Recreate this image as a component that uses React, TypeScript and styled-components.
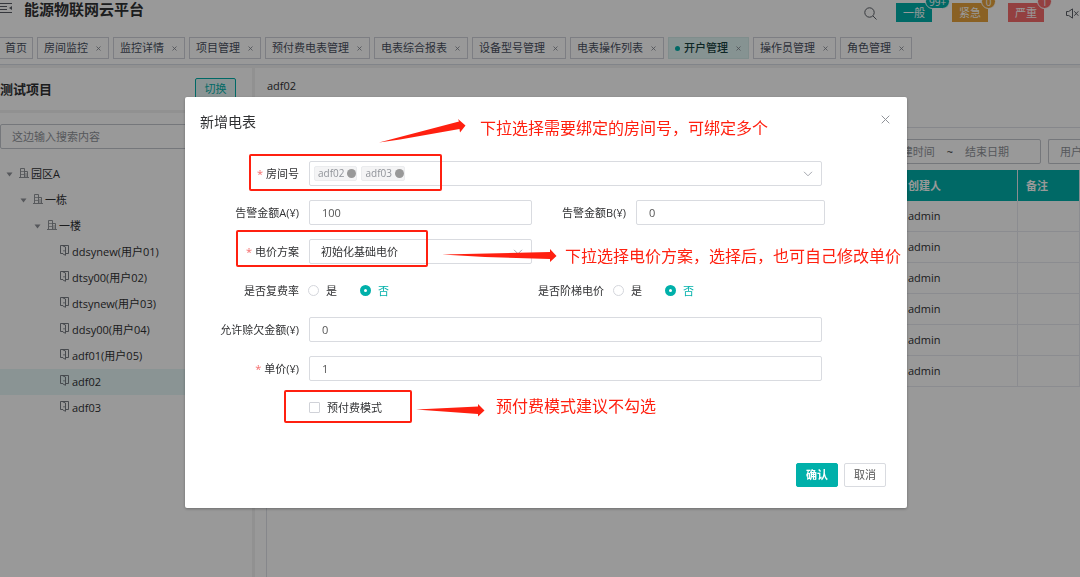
import React from "react";
import styled, { createGlobalStyle } from "styled-components";

const teal = "#00b0aa";
const red = "#ff2010";

const Global = createGlobalStyle`
  * { box-sizing: border-box; }
  html, body, #root { height: 100%; }
  body {
    margin: 0;
    overflow: hidden;
    background: #f2f2f2;
    color: #303133;
    font: 11px/16px "Open Sans", "Noto Sans CJK SC", sans-serif;
  }
  button, input, select { font: inherit; color: inherit; }
  h1, h2, ul { margin: 0; padding: 0; }
`;

const Page = styled.div`
  display: flex;
  flex-direction: column;
  min-height: 100%;
`;
const Header = styled.header`
  background: #fff;
  border-bottom: 1px solid #d8dce5;
`;
const TopBar = styled.div`
  display: flex;
  align-items: flex-start;
  height: 37px;
`;
const MenuButton = styled.button`
  width: 12px;
  height: 18px;
  padding: 0;
  border: 0;
  background: none;
  svg { display: block; }
`;
const Brand = styled.h1`
  flex: 1;
  padding-left: 12px;
  font-size: 15px;
  line-height: 18px;
`;
const TopTools = styled.div`
  display: flex;
  align-items: flex-start;
  padding: 3px 1px 0 0;
`;
const IconButton = styled.button`
  display: flex;
  align-items: center;
  height: 20px;
  padding: 0;
  border: 0;
  background: none;
  color: #5a5e66;
`;
const Alarms = styled.div`
  display: flex;
  gap: 20px;
  padding: 0 22px 0 19px;
`;
const Alarm = styled.button<{ $color: string }>`
  position: relative;
  width: 36px;
  height: 19px;
  padding: 0;
  border: 0;
  background: ${(p) => p.$color};
  color: #fff;
  line-height: 19px;
`;
const Count = styled.span<{ $color: string }>`
  position: absolute;
  left: 29px;
  bottom: 13px;
  min-width: 15px;
  height: 15px;
  padding: 0 3px;
  border: 1px solid #fff;
  border-radius: 8px;
  background: ${(p) => p.$color};
  font-size: 10px;
  line-height: 14px;
`;
const Tabs = styled.nav`
  display: flex;
  gap: 4px;
  height: 27px;
`;
const Tab = styled.a<{ $active?: boolean; $first?: boolean }>`
  display: flex;
  align-items: center;
  flex: none;
  height: 22px;
  padding: 0 ${(p) => (p.$first ? 5 : 7)}px 0 ${(p) => (p.$first ? 5 : 6)}px;
  border: 1px solid ${(p) => (p.$active ? "#d4ecea" : "#d0d3da")};
  border-left-width: ${(p) => (p.$first ? 0 : 1)}px;
  background: ${(p) => (p.$active ? "#e0f5f4" : "#fff")};
  color: ${(p) => (p.$active ? "#17403e" : "#495060")};
  font-weight: ${(p) => (p.$active ? 500 : 400)};
  text-decoration: none;
  white-space: nowrap;
`;
const Dot = styled.i`
  width: 5px;
  height: 5px;
  margin-right: 4px;
  border-radius: 50%;
  background: ${teal};
`;
const TabClose = styled.svg`
  width: 5px;
  height: 5px;
  margin-left: 8px;
`;
const Body = styled.div`
  display: flex;
  flex: 1;
  gap: 3px;
  padding-top: 3px;
`;
const Sidebar = styled.aside`
  flex: 0 0 252px;
  background: #fff;
`;
const ProjectBar = styled.div`
  display: flex;
  align-items: center;
  justify-content: space-between;
  height: 45px;
  padding-right: 16px;
  border-bottom: 3px solid #f2f2f2;
`;
const ProjectName = styled.h2`
  font-size: 13px;
  line-height: 18px;
`;
const SwitchButton = styled.button`
  width: 41px;
  height: 22px;
  padding: 0;
  border: 1px solid ${teal};
  border-radius: 2px;
  background: #e6f7f7;
  color: ${teal};
`;
const SearchBox = styled.input`
  display: block;
  width: 240px;
  height: 25px;
  margin: 11px 0 12px;
  padding: 0 11px;
  border: 1px solid #c4c7ce;
  border-radius: 2px;
  background: #fff;
  &::placeholder { color: #909399; opacity: 1; }
`;
const Tree = styled.ul`list-style: none;`;
const TreeRow = styled.li<{ $level: number; $selected?: boolean }>`
  display: flex;
  align-items: center;
  height: 26px;
  padding-left: ${(p) => 6 + p.$level * 14}px;
  background: ${(p) => (p.$selected ? "#e6f7f7" : "transparent")};
  white-space: nowrap;
`;
const Caret = styled.svg`
  width: 7px;
  height: 5px;
  margin-right: 6px;
`;
const Leaf = styled.svg`
  width: 9px;
  height: 11px;
  margin: 0 3px 4px 12px;
`;
const Building = styled.svg`
  width: 10px;
  height: 10px;
  margin: 0 2px 2px 0;
`;
const Main = styled.main`
  display: flex;
  flex-direction: column;
  flex: 1;
  min-width: 0;
  background: #fff;
`;
const MainTitle = styled.h2`
  height: 60px;
  padding: 10px 12px;
  border-bottom: 1px solid #dfe2e8;
  font-size: 11px;
  font-weight: 500;
  line-height: 16px;
`;
const Panel = styled.div`
  flex: 1;
  margin-left: 11px;
  border-left: 1px solid #dfe2e8;
`;
const Filters = styled.div`
  display: flex;
  justify-content: flex-end;
  gap: 7px;
  padding: 11px 0 6px;
`;
const DateRange = styled.div`
  display: flex;
  align-items: center;
  justify-content: flex-end;
  gap: 12px;
  width: 240px;
  height: 25px;
  padding-right: 12px;
  border: 1px solid #c4c7ce;
  border-radius: 2px;
`;
const DateInput = styled.input<{ $align?: string }>`
  width: 63px;
  padding: 0;
  border: 0;
  background: none;
  text-align: ${(p) => p.$align ?? "left"};
  &::placeholder { color: #909399; opacity: 1; }
`;
const UserFilter = styled.input`
  width: 32px;
  height: 25px;
  padding: 0 0 0 11px;
  border: 1px solid #c4c7ce;
  border-right: 0;
  border-radius: 2px 0 0 2px;
  &::placeholder { color: #909399; opacity: 1; }
`;
const Grid = styled.table`
  width: 100%;
  border-collapse: separate;
  border-spacing: 0;
  table-layout: fixed;
`;
const HeadCell = styled.th<{ $w?: number }>`
  width: ${(p) => (p.$w ? p.$w + "px" : "auto")};
  height: 31px;
  padding: 0 8px;
  border-right: 1px solid #e8eaf0;
  background: ${teal};
  color: #fff;
  text-align: left;
`;
const Cell = styled.td`
  height: 31px;
  padding: 0 8px;
  border-right: 1px solid #e8eaf0;
  border-bottom: 1px solid #e8eaf0;
`;

const Overlay = styled.div`
  position: fixed;
  inset: 0;
  padding: 97px 173px 24px 185px;
  background: rgba(0, 0, 0, 0.4);
`;
const Dialog = styled.section`
  position: relative;
  padding: 15px 0 21px;
  border-radius: 2px;
  background: #fff;
  box-shadow: 0 1px 3px rgba(0, 0, 0, 0.3);
`;
const DialogHead = styled.div`
  display: flex;
  align-items: flex-start;
  justify-content: space-between;
  height: 49px;
  padding: 0 17px 0 15px;
`;
const DialogTitle = styled.h2`
  font-size: 14px;
  font-weight: 400;
  line-height: 20px;
`;
const CloseButton = styled.button`
  padding: 3px 0 0;
  border: 0;
  background: none;
  svg { display: block; }
`;
const Form = styled.form`
  display: flex;
  flex-direction: column;
  gap: 14px;
`;
const Row = styled.div<{ $pair?: boolean; $end?: number }>`
  display: grid;
  grid-template-columns: ${(p) => (p.$pair ? "347px 1fr" : "1fr")};
  height: 25px;
  padding-right: ${(p) => p.$end ?? 85}px;
`;
const Field = styled.div<{ $label?: number; $gap?: number }>`
  display: grid;
  grid-template-columns: ${(p) => p.$label ?? 114}px 1fr;
  column-gap: ${(p) => p.$gap ?? 10}px;
  align-items: center;
`;
const Label = styled.label<{ $required?: boolean }>`
  text-align: right;
  white-space: nowrap;
  &::before {
    content: "${(p) => (p.$required ? "*" : "")}";
    margin-right: ${(p) => (p.$required ? 3 : 0)}px;
    color: #f56c6c;
  }
`;
const TextInput = styled.input`
  width: 100%;
  height: 25px;
  padding: 0 12px;
  border: 1px solid #d9dbe0;
  border-radius: 2px;
  background: #fff;
  color: #555;
`;
const SelectWrap = styled.div`
  display: flex;
  align-items: center;
  height: 25px;
  padding: 0 8px 0 4px;
  border: 1px solid #d9dbe0;
  border-radius: 2px;
`;
const Select = styled.select`
  flex: 1;
  min-width: 0;
  height: 23px;
  padding: 0 0 0 7px;
  border: 0;
  appearance: none;
  background: none;
  outline: 0;
`;
const Tag = styled.span`
  display: flex;
  align-items: center;
  gap: 3px;
  height: 15px;
  margin-right: 4px;
  padding: 0 0 0 3px;
  border: 1px solid #ebecee;
  border-radius: 2px;
  background: #f4f4f5;
  color: #909399;
  font-size: 10px;
  line-height: 13px;
`;
const TagRemove = styled.button`
  width: 9px;
  height: 9px;
  padding: 0;
  border: 0;
  border-radius: 50%;
  background: #999;
`;
const Choices = styled.div`
  display: flex;
  gap: 23px;
`;
const Choice = styled.label<{ $on?: boolean }>`
  display: flex;
  align-items: center;
  gap: 7px;
  color: ${(p) => (p.$on ? teal : "inherit")};
`;
const Radio = styled.input`
  width: 11px;
  height: 11px;
  margin: 0;
  border: 1px solid #d4d6dc;
  border-radius: 50%;
  appearance: none;
  &:checked {
    border: 4px solid ${teal};
  }
`;
const Check = styled.input`
  width: 11px;
  height: 11px;
  margin: 0;
  border: 1px solid #d0d2d8;
  border-radius: 1px;
  appearance: none;
`;
const Footer = styled.footer`
  display: flex;
  justify-content: flex-end;
  gap: 6px;
  padding: 43px 21px 0 0;
`;
const ActionButton = styled.button<{ $primary?: boolean }>`
  width: 42px;
  height: 24px;
  padding: 0;
  border: 1px solid ${(p) => (p.$primary ? teal : "#d9dbe0")};
  border-radius: 2px;
  background: ${(p) => (p.$primary ? teal : "#fff")};
  color: ${(p) => (p.$primary ? "#fff" : "#555")};
  font-weight: ${(p) => (p.$primary ? 700 : 400)};
`;

const Highlight = styled.div<{ $x: number; $y: number; $w: number; $h: number }>`
  position: absolute;
  left: ${(p) => p.$x}px;
  top: ${(p) => p.$y}px;
  width: ${(p) => p.$w}px;
  height: ${(p) => p.$h}px;
  border: 2px solid ${red};
  border-radius: 2px;
  pointer-events: none;
`;
const Note = styled.p<{ $x: number; $y: number }>`
  position: absolute;
  left: ${(p) => p.$x}px;
  top: ${(p) => p.$y}px;
  margin: 0;
  color: ${red};
  font-size: 16px;
  line-height: 24px;
  white-space: nowrap;
`;
const Arrows = styled.svg`
  position: absolute;
  left: 0;
  top: 0;
  pointer-events: none;
`;

const tabs = [
  "房间监控", "监控详情", "项目管理", "预付费电表管理", "电表综合报表",
  "设备型号管理", "电表操作列表", "开户管理", "操作员管理", "角色管理",
];
const alarms = [
  { name: "一般", count: "99+", color: "#00b0aa" },
  { name: "紧急", count: "0", color: "#e6a23c" },
  { name: "严重", count: "1", color: "#f56c6c" },
];
const branches = ["园区A", "一栋", "一楼"];
const leaves = [
  "ddsynew(用户01)", "dtsy00(用户02)", "dtsynew(用户03)",
  "ddsy00(用户04)", "adf01(用户05)", "adf02", "adf03",
];

const Chevron = () => (
  <svg width="10" height="6" viewBox="0 0 10 6" fill="none" stroke="#a4a7ae">
    <path d="M1 .8 5 4.8 9 .8" />
  </svg>
);

const YesNo = ({ name }: { name: string }) => (
  <Choices>
    <Choice><Radio type="radio" name={name} />是</Choice>
    <Choice $on><Radio type="radio" name={name} defaultChecked />否</Choice>
  </Choices>
);

export default function App() {
  return (
    <>
      <Global />
      <Page>
        <Header>
          <TopBar>
            <MenuButton aria-label="折叠菜单">
              <svg width="12" height="18" stroke="#5a5e66" fill="none">
                <path d="M0 3.5h12M0 6.5h7M0 9.5h7M0 12.5h12" />
                <path d="M12 6v4L9 8z" fill="#5a5e66" stroke="none" />
              </svg>
            </MenuButton>
            <Brand>能源物联网云平台</Brand>
            <TopTools>
              <IconButton aria-label="搜索">
                <svg width="13" height="13" viewBox="0 0 13 13" fill="none" stroke="currentColor">
                  <circle cx="5.5" cy="5.5" r="4.7" />
                  <path d="m9 9 3.5 3.5" />
                </svg>
              </IconButton>
              <Alarms>
                {alarms.map((a) => (
                  <Alarm key={a.name} $color={a.color}>
                    {a.name}
                    <Count $color={a.color}>{a.count}</Count>
                  </Alarm>
                ))}
              </Alarms>
              <IconButton aria-label="静音">
                <svg width="13" height="11" viewBox="0 0 13 11" fill="none" stroke="currentColor">
                  <path d="M.5 3.5h2.2L6.5.9v9.2L2.7 7.5H.5zM8.3 3.3l4 4.4M12.3 3.3l-4 4.4" />
                </svg>
              </IconButton>
            </TopTools>
          </TopBar>
          <Tabs>
            <Tab href="#" $first>首页</Tab>
            {tabs.map((t) => (
              <Tab key={t} href="#" $active={t === "开户管理"}>
                {t === "开户管理" && <Dot />}
                {t}
                <TabClose viewBox="0 0 5 5" stroke="#7d828c" strokeWidth=".8">
                  <path d="m.5.5 4 4m0-4-4 4" />
                </TabClose>
              </Tab>
            ))}
          </Tabs>
        </Header>
        <Body>
          <Sidebar>
            <ProjectBar>
              <ProjectName>测试项目</ProjectName>
              <SwitchButton>切换</SwitchButton>
            </ProjectBar>
            <SearchBox aria-label="搜索" placeholder="这边输入搜索内容" />
            <Tree>
              {branches.map((b, i) => (
                <TreeRow key={b} $level={i}>
                  <Caret viewBox="0 0 7 5"><path d="M.5.5h6l-3 4z" fill="#909399" /></Caret>
                  <Building viewBox="0 0 10 10" fill="none" stroke="#85898f" strokeWidth=".9">
                    <path d="M1.5 9V.5h4V9M5.500 3.500h3V9M0 9.500h10" />
                    <path d="M2 3.500h3M2 6.500h3M7 5v4" strokeWidth=".7" />
                  </Building>
                  {b}
                </TreeRow>
              ))}
              {leaves.map((l) => (
                <TreeRow key={l} $level={3} $selected={l === "adf02"}>
                  <Leaf viewBox="0 0 9 11" fill="none" stroke="#6a6e76" strokeWidth=".9">
                    <path d="M3 8.500H.5v-8h8v8H6M2.500.7 5.500 2v8.300L3 9M4 5v1.500" />
                  </Leaf>
                  {l}
                </TreeRow>
              ))}
            </Tree>
          </Sidebar>
          <Main>
            <MainTitle>adf02</MainTitle>
            <Panel>
              <Filters>
                <DateRange>
                  <DateInput aria-label="创建时间" placeholder="创建时间" $align="right" />
                  <span>~</span>
                  <DateInput aria-label="结束日期" placeholder="结束日期" />
                </DateRange>
                <UserFilter aria-label="用户" placeholder="用户" />
              </Filters>
              <Grid>
                <thead>
                  <tr>
                    <HeadCell />
                    <HeadCell $w={118}>创建人</HeadCell>
                    <HeadCell $w={62}>备注</HeadCell>
                  </tr>
                </thead>
                <tbody>
                  {[0, 1, 2, 3, 4, 5].map((n) => (
                    <tr key={n}><Cell /><Cell>admin</Cell><Cell /></tr>
                  ))}
                </tbody>
              </Grid>
            </Panel>
          </Main>
        </Body>
      </Page>

      <Overlay>
        <Dialog role="dialog" aria-labelledby="dialog-title">
          <DialogHead>
            <DialogTitle id="dialog-title">新增电表</DialogTitle>
            <CloseButton aria-label="关闭">
              <svg width="9" height="9" viewBox="0 0 9 9" stroke="#909399">
                <path d="m.7.7 7.600 7.600m0-7.600L.7 8.300" />
              </svg>
            </CloseButton>
          </DialogHead>
          <Form>
            <Row>
              <Field>
                <Label htmlFor="room" $required>房间号</Label>
                <SelectWrap>
                  {["adf02", "adf03"].map((r) => (
                    <Tag key={r}>{r}<TagRemove type="button" aria-label={"移除" + r} /></Tag>
                  ))}
                  <Select id="room" />
                  <Chevron />
                </SelectWrap>
              </Field>
            </Row>
            <Row $pair $end={82}>
              <Field>
                <Label htmlFor="alarm-a">告警金额A(¥)</Label>
                <TextInput id="alarm-a" defaultValue="100" />
              </Field>
              <Field $label={94}>
                <Label htmlFor="alarm-b">告警金额B(¥)</Label>
                <TextInput id="alarm-b" defaultValue="0" />
              </Field>
            </Row>
            <Row $pair>
              <Field>
                <Label htmlFor="plan" $required>电价方案</Label>
                <SelectWrap>
                  <Select id="plan"><option>初始化基础电价</option></Select>
                  <Chevron />
                </SelectWrap>
              </Field>
            </Row>
            <Row $pair>
              <Field $gap={9} role="radiogroup" aria-label="是否复费率">
                <Label as="span">是否复费率</Label>
                <YesNo name="multi-rate" />
              </Field>
              <Field $label={72} $gap={9} role="radiogroup" aria-label="是否阶梯电价">
                <Label as="span">是否阶梯电价</Label>
                <YesNo name="ladder" />
              </Field>
            </Row>
            <Row>
              <Field>
                <Label htmlFor="credit">允许赊欠金额(¥)</Label>
                <TextInput id="credit" defaultValue="0" />
              </Field>
            </Row>
            <Row>
              <Field>
                <Label htmlFor="price" $required>单价(¥)</Label>
                <TextInput id="price" defaultValue="1" />
              </Field>
            </Row>
            <Row>
              <Field>
                <span />
                <Choice><Check type="checkbox" />预付费模式</Choice>
              </Field>
            </Row>
          </Form>
          <Footer>
            <ActionButton $primary>确认</ActionButton>
            <ActionButton>取消</ActionButton>
          </Footer>

          <Highlight $x={64} $y={57} $w={193} $h={37} />
          <Highlight $x={51} $y={133} $w={192} $h={37} />
          <Highlight $x={99} $y={293} $w={128} $h={33} />
          <Arrows width="400" height="330" fill={red}>
            <path d="M194 45.500 274 24.500 273 22 280.500 28.500 275 35.500 274.500 32 215 42.500Z" />
            <path d="M257 157.500 365 155V152L371.500 159 365 165V162L300 160Z" />
            <path d="M231 312.500 293 309.500V307L299.500 313.500 293 319.500V317Z" />
          </Arrows>
          <Note $x={295} $y={19}>下拉选择需要绑定的房间号，可绑定多个</Note>
          <Note $x={380} $y={147}>下拉选择电价方案，选择后，也可自己修改单价</Note>
          <Note $x={311} $y={297}>预付费模式建议不勾选</Note>
        </Dialog>
      </Overlay>
    </>
  );
}
